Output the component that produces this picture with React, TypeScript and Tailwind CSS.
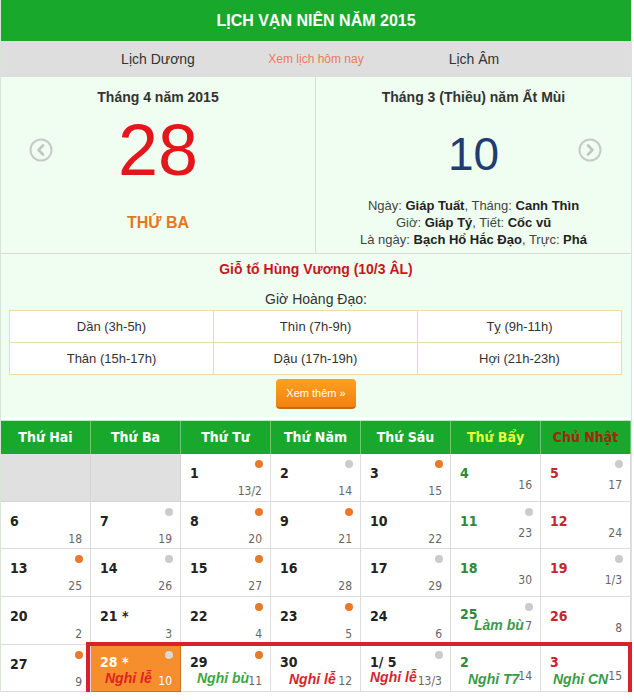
import React from "react";

type Cell = {
  d?: string;
  lunar?: string;
  dot?: "o" | "g" | "w";
  tone?: "sat" | "sun" | "today";
  label?: { t: string; color: string; pos: string };
  lunarPos?: string;
  empty?: boolean;
};

const dotColor = {
  o: "bg-[#e97a2b]",
  g: "bg-[#cbcbcb]",
  w: "bg-[#d9d9d9]",
};

const weeks: Cell[][] = [
  [
    { empty: true },
    { empty: true },
    { d: "1", lunar: "13/2", dot: "o" },
    { d: "2", lunar: "14", dot: "g" },
    { d: "3", lunar: "15", dot: "o" },
    { d: "4", lunar: "16", tone: "sat" },
    { d: "5", lunar: "17", dot: "g", tone: "sun" },
  ],
  [
    { d: "6", lunar: "18" },
    { d: "7", lunar: "19", dot: "g" },
    { d: "8", lunar: "20", dot: "o" },
    { d: "9", lunar: "21", dot: "o" },
    { d: "10", lunar: "22" },
    { d: "11", lunar: "23", dot: "g", tone: "sat" },
    { d: "12", lunar: "24", tone: "sun" },
  ],
  [
    { d: "13", lunar: "25", dot: "o" },
    { d: "14", lunar: "26", dot: "g" },
    { d: "15", lunar: "27", dot: "o" },
    { d: "16", lunar: "28" },
    { d: "17", lunar: "29", dot: "g" },
    { d: "18", lunar: "30", tone: "sat" },
    { d: "19", lunar: "1/3", dot: "g", tone: "sun" },
  ],
  [
    { d: "20", lunar: "2" },
    { d: "21 *", lunar: "3" },
    { d: "22", lunar: "4", dot: "o" },
    { d: "23", lunar: "5", dot: "o" },
    { d: "24", lunar: "6" },
    {
      d: "25",
      lunar: "7",
      dot: "g",
      tone: "sat",
      lunarPos: "top-[22px]",
      label: { t: "Làm bù", color: "text-[#3a9a48]", pos: "left-[23px] top-[21px]" },
    },
    { d: "26", lunar: "8", tone: "sun" },
  ],
  [
    { d: "27", lunar: "9", dot: "o" },
    {
      d: "28 *",
      lunar: "10",
      dot: "w",
      tone: "today",
      lunarPos: "top-[29px]",
      label: { t: "Nghỉ lễ", color: "text-[#e0231f]", pos: "left-[14px] top-[26px]" },
    },
    {
      d: "29",
      lunar: "11",
      dot: "o",
      lunarPos: "top-[29px]",
      label: { t: "Nghỉ bù", color: "text-[#3aa845]", pos: "left-[16px] top-[26px]" },
    },
    {
      d: "30",
      lunar: "12",
      lunarPos: "top-[29px]",
      label: { t: "Nghỉ lễ", color: "text-[#d3262e]", pos: "left-[18px] top-[27px]" },
    },
    {
      d: "1/ 5",
      lunar: "13/3",
      dot: "g",
      lunarPos: "top-[29px]",
      label: { t: "Nghỉ lễ", color: "text-[#d3262e]", pos: "left-[9px] top-[25px]" },
    },
    {
      d: "2",
      lunar: "14",
      tone: "sat",
      label: { t: "Nghỉ T7", color: "text-[#3a9a48]", pos: "left-[17px] top-[27px]" },
    },
    {
      d: "3",
      lunar: "15",
      tone: "sun",
      label: { t: "Nghỉ CN", color: "text-[#3a9a48]", pos: "left-[12px] top-[27px]" },
    },
  ],
];

const hours = [
  "Dần (3h-5h)",
  "Thìn (7h-9h)",
  "Tỵ (9h-11h)",
  "Thân (15h-17h)",
  "Dậu (17h-19h)",
  "Hợi (21h-23h)",
];

function Arrow({ dir }: { dir: "left" | "right" }) {
  return (
    <svg width="24" height="24" viewBox="0 0 24 24" fill="none">
      <circle cx="12" cy="12" r="10.5" stroke="#c9c9c9" strokeWidth="2" />
      {dir === "left" ? (
        <path d="M14 7.5 9.5 12l4.5 4.5" stroke="#c4c4c4" strokeWidth="2.6" strokeLinecap="round" strokeLinejoin="round" />
      ) : (
        <path d="M10 7.5l4.5 4.5-4.5 4.5" stroke="#c4c4c4" strokeWidth="2.6" strokeLinecap="round" strokeLinejoin="round" />
      )}
    </svg>
  );
}

function DayCell({ c }: { c: Cell }) {
  if (c.empty) {
    return <div className="h-[47.7px] bg-[#e0e0e0] border-r border-b border-[#d4d4d4]" />;
  }
  const weekend = c.tone === "sat" || c.tone === "sun";
  const today = c.tone === "today";
  const dateColor =
    c.tone === "sat"
      ? "text-[#2d8a3a]"
      : c.tone === "sun"
      ? "text-[#c4262e]"
      : today
      ? "text-white"
      : "text-[#222]";
  const lunarPos = c.lunarPos ?? (weekend ? "top-[24px]" : "top-[30px]");

  return (
    <div
      className={`relative h-[47.7px] border-r border-b ${
        today ? "bg-[#f68e2e] border-[#c8732a]" : "bg-white border-[#dcdcdc]"
      }`}
    >
      <span
        className={`absolute left-[9px] ${c.label ? "top-[10px]" : "top-[12px]"} text-[14px] font-bold leading-[14px] ${dateColor}`}
      >
        {c.d}
      </span>
      {c.dot && (
        <span className={`absolute right-[7px] top-[6px] size-2 rounded-full ${dotColor[c.dot]}`} />
      )}
      {c.label && (
        <span
          className={`absolute ${c.label.pos} ${c.label.color} font-['Liberation_Sans',Arial,sans-serif] text-[14px] font-bold italic leading-[14px] whitespace-nowrap`}
        >
          {c.label.t}
        </span>
      )}
      <span
        className={`absolute right-[8px] ${lunarPos} text-[12px] leading-[14px] ${
          today ? "text-white" : "text-[#666]"
        }`}
      >
        {c.lunar}
      </span>
    </div>
  );
}

export default function App() {
  return (
    <div className="w-[634px] bg-white">
      <div className="w-[632px] border-x border-[#d8e4d8] font-['Liberation_Sans',Arial,sans-serif]">
        {/* title */}
        <div className="h-[41px] bg-[#18a82b] flex items-center justify-center text-white text-[16px] font-bold">
          LỊCH VẠN NIÊN NĂM 2015
        </div>

        {/* nav */}
        <div className="h-[36px] bg-[#dedede] grid grid-cols-3 items-center text-center px-[78px]">
          <span className="text-[14px] text-[#333]">Lịch Dương</span>
          <span className="text-[12px] text-[#ee7a5f]">Xem lịch hôm nay</span>
          <span className="text-[14px] text-[#333]">Lịch Âm</span>
        </div>

        {/* day panels */}
        <div className="grid grid-cols-2 h-[177px] border-b border-[#dcdcdc] bg-[#effef1]">
          <div className="relative flex flex-col items-center pt-[10px] border-r border-[#dcdcdc]">
            <div className="text-[14px] leading-[20px] font-bold text-[#333]">Tháng 4 năm 2015</div>
            <div className="mt-[7px] text-[72px] leading-none text-[#e3161b]">28</div>
            <div className="mt-[27px] text-[16px] leading-[20px] font-bold text-[#e3781f]">THỨ BA</div>
            <div className="absolute left-[28px] top-[61px]">
              <Arrow dir="left" />
            </div>
          </div>
          <div className="relative flex flex-col items-center pt-[10px]">
            <div className="text-[14px] leading-[20px] font-bold text-[#333]">Tháng 3 (Thiều) năm Ất Mùi</div>
            <div className="mt-[24px] text-[46px] leading-none text-[#1f3d70]">10</div>
            <div className="mt-[20px] text-[13px] leading-[17px] text-[#444] text-center">
              <div>
                Ngày: <b className="text-[#222]">Giáp Tuất</b>, Tháng: <b className="text-[#222]">Canh Thìn</b>
              </div>
              <div>
                Giờ: <b className="text-[#222]">Giáp Tý</b>, Tiết: <b className="text-[#222]">Cốc vũ</b>
              </div>
              <div>
                Là ngày: <b className="text-[#222]">Bạch Hổ Hắc Đạo</b>, Trực: <b className="text-[#222]">Phá</b>
              </div>
            </div>
            <div className="absolute right-[29px] top-[61px]">
              <Arrow dir="right" />
            </div>
          </div>
        </div>

        {/* holiday + good hours */}
        <div className="bg-[#effef1] pt-[5px] pb-[8px] flex flex-col items-center">
          <div className="text-[14px] leading-[20px] font-bold text-[#c8161d]">Giỗ tổ Hùng Vương (10/3 ÂL)</div>
          <div className="mt-[10px] text-[14px] leading-[20px] text-[#333]">Giờ Hoàng Đạo:</div>
          <div className="mt-[1px] w-[613px] self-start ml-[8px] grid grid-cols-3 border-l border-t border-[#ecdcab] bg-white">
            {hours.map((h) => (
              <div
                key={h}
                className="h-[32px] flex items-center justify-center border-r border-b border-[#ecdcab] text-[13px] text-[#333]"
              >
                {h}
              </div>
            ))}
          </div>
          <button className="mt-[4px] w-[80px] h-[30px] rounded-[4px] bg-gradient-to-b from-[#fca020] to-[#f2820e] border-b-2 border-[#c86a12] text-white text-[11px]">
            Xem thêm »
          </button>
        </div>

        {/* month grid */}
        <div className="mt-[3px] font-['DejaVu_Sans_Condensed','DejaVu_Sans',sans-serif] font-stretch-condensed">
          <div className="grid grid-cols-7 h-[34px] bg-[#18a82b] border-t border-[#bfe8c4]">
            {["Thứ Hai", "Thứ Ba", "Thứ Tư", "Thứ Năm", "Thứ Sáu", "Thứ Bẩy", "Chủ Nhật"].map((d, i) => (
              <div
                key={d}
                className={`flex items-center justify-center border-r border-[#6cc777] text-[14px] font-bold ${
                  i === 5 ? "text-[#e8ff3c]" : i === 6 ? "text-[#a0280c]" : "text-white"
                }`}
              >
                {d}
              </div>
            ))}
          </div>
          {weeks.map((w, wi) => (
            <div key={wi} className="relative grid grid-cols-7">
              {w.map((c, ci) => (
                <DayCell key={ci} c={c} />
              ))}
              {wi === 4 && (
                <div className="absolute left-[85px] right-[-1px] top-[-3px] h-[59px] border-4 border-[#d6232b]" />
              )}
            </div>
          ))}
        </div>
      </div>
    </div>
  );
}
